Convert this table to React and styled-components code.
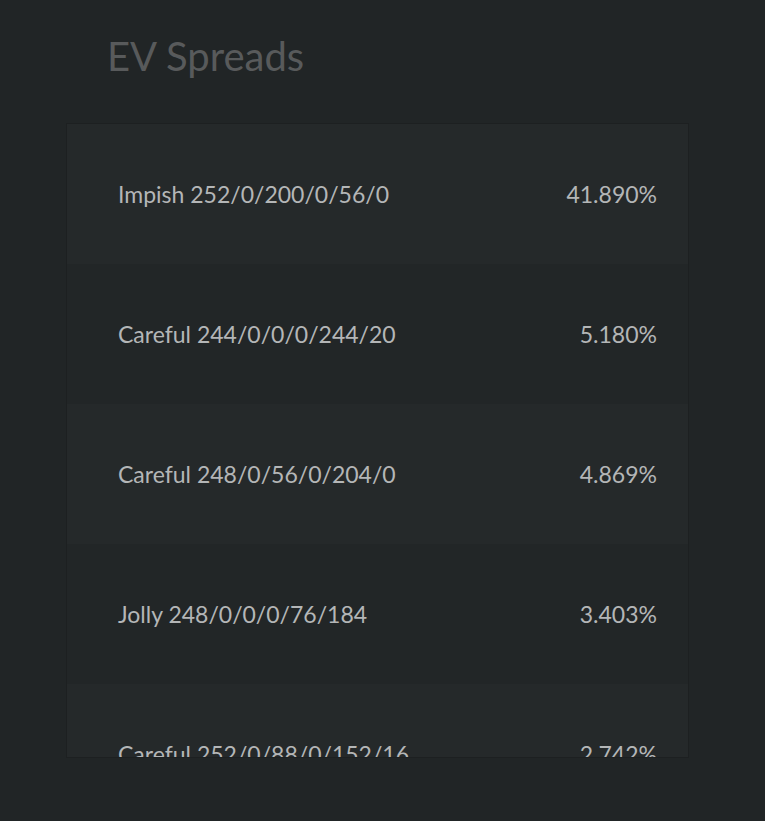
import React from "react";
import styled, { createGlobalStyle } from "styled-components";

const Global = createGlobalStyle`
  html, body { margin: 0; padding: 0; background: #212526; }
  body { font-family: Lato, "Open Sans", sans-serif; }
`;

const Page = styled.div`
  width: 765px;
  height: 821px;
  background: #212526;
  padding: 28px 0 0 66px;
  box-sizing: border-box;
`;

const Title = styled.h2`
  margin: 0 0 38px 41px;
  font-weight: 400;
  font-size: 40px;
  line-height: 57px;
  color: #585a5b;
`;

const Card = styled.div`
  width: 623px;
  height: 635px;
  box-sizing: border-box;
  border: 1px solid #1d2021;
  overflow: hidden;
`;

const Row = styled.div`
  display: flex;
  align-items: center;
  justify-content: space-between;
  height: 140px;
  padding: 0 31px 0 51px;
  background: ${(p) => (p.$alt ? "#222627" : "#25292a")};
  color: #b4b6b7;
  font-size: 23px;
`;

const data = [
  ["Impish 252/0/200/0/56/0", "41.890%"],
  ["Careful 244/0/0/0/244/20", "5.180%"],
  ["Careful 248/0/56/0/204/0", "4.869%"],
  ["Jolly 248/0/0/0/76/184", "3.403%"],
  ["Careful 252/0/88/0/152/16", "2.742%"],
];

export default function App() {
  return (
    <Page>
      <Global />
      <Title>EV Spreads</Title>
      <Card>
        {data.map(([name, pct], i) => (
          <Row key={i} $alt={i % 2 === 1}>
            <span>{name}</span>
            <span>{pct}</span>
          </Row>
        ))}
      </Card>
    </Page>
  );
}
